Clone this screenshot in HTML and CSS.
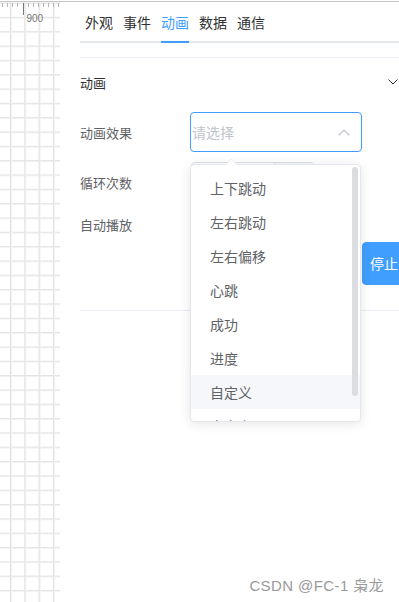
FILE: index.html
```html
<!DOCTYPE html>
<html lang="zh-CN">
<head>
    <meta charset="UTF-8">
    <meta name="viewport" content="width=device-width, initial-scale=1.0">
    <title>动画设置</title>
    <link rel="stylesheet" href="styles.css">
</head>
<body>
    <div class="topline"></div>
    <div class="workspace">
        <div class="ruler">
            <svg class="ruler-ticks" width="60" height="24" viewBox="0 0 60 24">
                <g stroke="#b4b4b4" stroke-width="1">
                    <line x1="2.5" y1="1" x2="2.5" y2="5"/>
                    <line x1="7.5" y1="1" x2="7.5" y2="5"/>
                    <line x1="12.5" y1="1" x2="12.5" y2="5"/>
                    <line x1="17.5" y1="1" x2="17.5" y2="5"/>
                    <line x1="28.5" y1="1" x2="28.5" y2="5"/>
                    <line x1="33.5" y1="1" x2="33.5" y2="5"/>
                    <line x1="38.5" y1="1" x2="38.5" y2="5"/>
                    <line x1="43.5" y1="1" x2="43.5" y2="5"/>
                    <line x1="48.5" y1="1" x2="48.5" y2="5"/>
                    <line x1="53.5" y1="1" x2="53.5" y2="5"/>
                    <line x1="58.5" y1="1" x2="58.5" y2="5"/>
                </g>
                <line x1="23.5" y1="1" x2="23.5" y2="13" stroke="#777" stroke-width="1"/>
                <text x="26.5" y="20" class="ruler-label">900</text>
            </svg>
        </div>

        <div class="panel">
            <div class="tabs">
                <div class="tab">外观</div>
                <div class="tab">事件</div>
                <div class="tab is-active">动画</div>
                <div class="tab">数据</div>
                <div class="tab">通信</div>
            </div>

            <div class="collapse">
                <div class="collapse-header">
                    <span>动画</span>
                    <svg class="collapse-arrow" width="10" height="6" viewBox="0 0 10 6">
                        <path d="M0.5 0.5 L5 5 L9.5 0.5" fill="none" stroke="#303133" stroke-width="1"/>
                    </svg>
                </div>
                <div class="collapse-content">
                    <div class="form-item item-effect">
                        <label class="form-label">动画效果</label>
                        <div class="select is-focus">
                            <span class="placeholder">请选择</span>
                            <svg width="12" height="7" viewBox="0 0 12 7">
                                <path d="M0.5 6.5 L6 1 L11.5 6.5" fill="none" stroke="#c0c4cc" stroke-width="1.2"/>
                            </svg>
                        </div>
                    </div>
                    <div class="form-item item-loop">
                        <label class="form-label">循环次数</label>
                        <div class="input-number">
                            <span class="input-number-value"></span>
                            <span class="input-number-btn"></span>
                        </div>
                    </div>
                    <div class="form-item item-auto">
                        <label class="form-label">自动播放</label>
                        <span class="switch"></span>
                    </div>
                    <div class="button-row">
                        <button class="btn"></button>
                        <button class="btn btn-primary">停止</button>
                    </div>
                </div>
            </div>
        </div>
    </div>

    <div class="dropdown">
        <ul class="dropdown-list">
            <li>上下跳动</li>
            <li>左右跳动</li>
            <li>左右偏移</li>
            <li>心跳</li>
            <li>成功</li>
            <li>进度</li>
            <li class="hover">自定义</li>
            <li>自定义</li>
        </ul>
        <div class="dropdown-thumb"></div>
    </div>
    <svg class="dropdown-arrow" width="13" height="7" viewBox="0 0 13 7">
        <polygon points="0,7 6.5,0.5 13,7" fill="#fff"/>
        <path d="M0.5 7 L6.5 1 L12.5 7" fill="none" stroke="#e4e7ed" stroke-width="1"/>
    </svg>

    <div class="watermark">CSDN @FC-1 枭龙</div>
</body>
</html>
```

FILE: styles.css
```css
html, body {
    margin: 0;
    height: 100%;
    overflow: hidden;
}

body {
    position: relative;
    font-family: "Noto Sans CJK SC", "Liberation Sans", sans-serif;
    background-color: #fff;
    color: #303133;
}

.topline {
    margin-top: 1px;
    height: 1px;
    background-color: #c6c6c6;
}

.workspace {
    display: flex;
    height: calc(100% - 2px);
}

.ruler {
    flex: 0 0 59px;
    margin-right: 1px;
    background-image:
        linear-gradient(to right, #e2e2e2 0, #e2e2e2 1px, #f1f1f1 1px, #f1f1f1 2px, transparent 2px),
        linear-gradient(to bottom, #e4e4e4 0, #e4e4e4 1px, #f2f2f2 1px, #f2f2f2 2px, transparent 2px);
    background-size: 14.33px 14.33px;
    background-position: 10px 0.5px;
}

.ruler-ticks {
    display: block;
}

.ruler-label {
    font-family: "Liberation Sans", sans-serif;
    font-size: 10px;
    fill: #777;
}

.panel {
    flex: 1;
    padding-left: 19px;
    min-width: 0;
}

.tabs {
    display: flex;
    height: 39px;
    border-bottom: 2px solid #e4e7ed;
}

.tab {
    margin: 0 5px -2px;
    padding-top: 2px;
    height: 37px;
    line-height: 37px;
    font-size: 14px;
    color: #303133;
    border-bottom: 2px solid transparent;
}

.tab.is-active {
    color: #409eff;
    border-bottom-color: #409eff;
}

.collapse {
    margin-top: 14px;
    border-top: 1px solid #ebeef5;
    border-bottom: 1px solid #ebeef5;
}

.collapse-header {
    display: flex;
    justify-content: space-between;
    align-items: center;
    height: 48px;
    font-size: 13px;
    color: #303133;
}

.collapse-arrow {
    margin-right: 1px;
}

.collapse-content {
    padding-bottom: 25px;
}

.form-item {
    display: flex;
    align-items: center;
}

.form-label {
    flex: 0 0 110px;
    font-size: 13px;
    color: #606266;
}

.item-effect {
    margin-top: 6px;
    height: 40px;
}

.item-loop {
    margin-top: 10px;
    height: 40px;
}

.item-auto {
    margin-top: 6px;
    height: 32px;
}

.select {
    box-sizing: border-box;
    display: flex;
    justify-content: space-between;
    align-items: center;
    width: 172px;
    height: 40px;
    padding: 0 11px 0 1px;
    border: 1px solid #dcdfe6;
    border-radius: 4px;
}

.select.is-focus {
    border-color: #409eff;
}

.placeholder {
    font-size: 14px;
    color: #c0c4cc;
}

.input-number {
    box-sizing: border-box;
    display: flex;
    width: 124px;
    height: 40px;
    margin-left: 1px;
    border: 1px solid #dcdfe6;
    border-radius: 4px;
}

.input-number-value {
    flex: 0 0 82px;
}

.input-number-btn {
    flex: 1;
    background-color: #f5f7fa;
    border-left: 1px solid #dcdfe6;
}

.switch {
    display: inline-block;
    width: 40px;
    height: 20px;
    margin-left: 2px;
    border-radius: 10px;
    background-color: #dcdfe6;
}

.button-row {
    display: flex;
    gap: 2px;
    margin-top: 2px;
    padding-left: 110px;
    height: 43px;
}

.btn {
    flex: 0 0 170px;
    box-sizing: border-box;
    height: 43px;
    margin: 0;
    padding: 0 0 2px 7px;
    text-align: left;
    font-family: inherit;
    font-size: 14px;
    color: #606266;
    background-color: #fff;
    border: 1px solid #dcdfe6;
    border-radius: 4px;
}

.btn-primary {
    flex: 0 0 68px;
    color: #fff;
    background-color: #409eff;
    border-color: #409eff;
}

.dropdown {
    position: absolute;
    left: 190px;
    top: 164px;
    box-sizing: border-box;
    width: 171px;
    height: 258px;
    background-color: #fff;
    border: 1px solid #e4e7ed;
    border-radius: 4px;
    box-shadow: 0 2px 12px 0 rgba(0, 0, 0, 0.1);
    overflow: hidden;
}

.dropdown-list {
    list-style: none;
    margin: 0;
    padding: 6px 0;
}

.dropdown-list li {
    height: 34px;
    line-height: 34px;
    padding-left: 19px;
    font-size: 14px;
    color: #606266;
}

.dropdown-list li.hover {
    background-color: #f5f7fa;
}

.dropdown-thumb {
    position: absolute;
    right: 2px;
    top: 2px;
    width: 6px;
    height: 229px;
    border-radius: 3px;
    background-color: #dcdde0;
}

.dropdown-arrow {
    position: absolute;
    left: 225px;
    top: 158px;
}

.watermark {
    position: absolute;
    right: 15px;
    top: 574px;
    font-family: "Liberation Sans", "Noto Sans CJK SC", sans-serif;
    font-size: 15px;
    letter-spacing: 0.4px;
    color: #9a9a9a;
    text-shadow: 0 0 2px #fff;
}
```
